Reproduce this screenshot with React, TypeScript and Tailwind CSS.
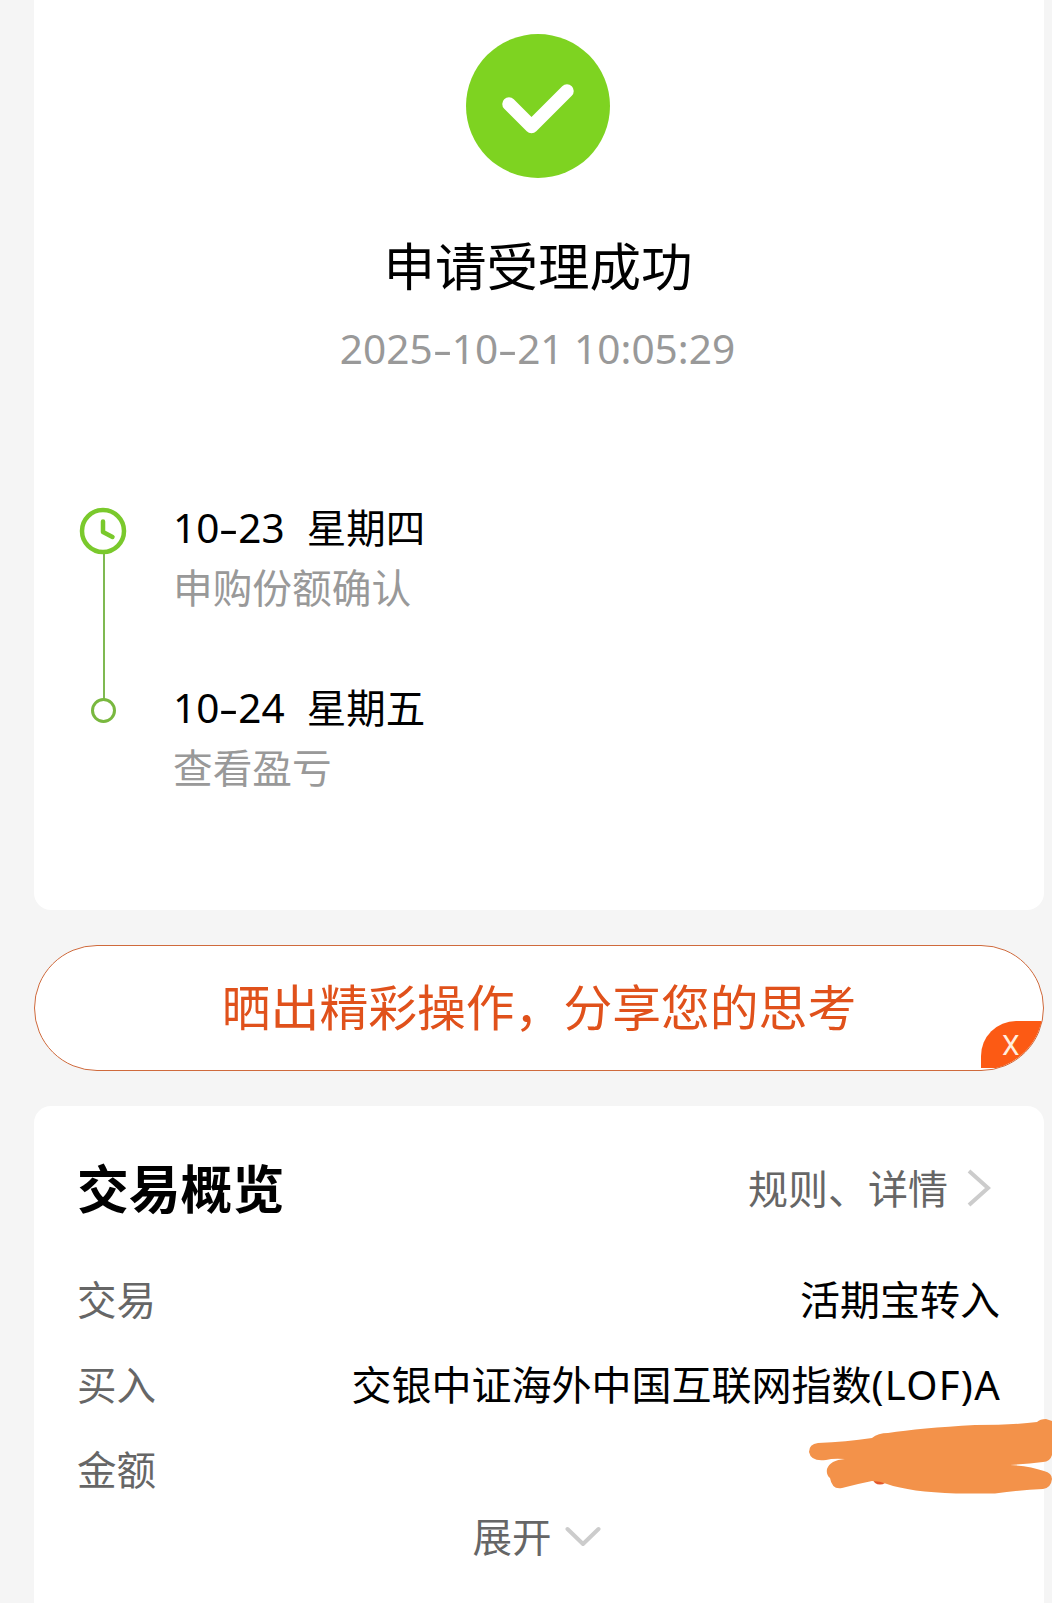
import React from 'react';

type StepType = {
  date: string;
  weekday: string;
  label: string;
};

type RowType = {
  label: string;
  value?: string;
  suffix?: string;
};

const steps: StepType[] = [
  { date: '10-23', weekday: '星期四', label: '申购份额确认' },
  { date: '10-24', weekday: '星期五', label: '查看盈亏' },
];

const rows: RowType[] = [
  { label: '交易', value: '活期宝转入' },
  { label: '买入', value: '交银中证海外中国互联网指数', suffix: '(LOF)A' },
  { label: '金额' },
];

// digits with a wide dash between the groups
const Digits: React.FC<{ text: string }> = ({ text }) => (
  <>
    {text.split('-').map((part, i) => (
      <React.Fragment key={i}>
        {i > 0 && (
          <span className="inline-block w-[19px] origin-center scale-x-[1.5] text-center">
            -
          </span>
        )}
        {part}
      </React.Fragment>
    ))}
  </>
);

const SuccessIcon = () => (
  <svg className="h-[144px] w-[144px]" viewBox="0 0 144 144" fill="none">
    <circle cx="72" cy="72" r="72" fill="#7ed321" />
    <path
      d="M43 70L65.500 92.500L101 57"
      stroke="#fff"
      strokeWidth="13.500"
      strokeLinecap="round"
      strokeLinejoin="round"
    />
  </svg>
);

const Timeline = () => (
  <svg className="h-[220px] w-[48px]" viewBox="0 0 48 220" fill="none">
    <path d="M25 45V192" stroke="#7fb951" strokeWidth="2" />
    <circle cx="24" cy="24" r="21" stroke="#7ac92c" strokeWidth="4.500" />
    <path
      d="M24 14.500V25L33.500 30"
      stroke="#7ac92c"
      strokeWidth="4.500"
      strokeLinecap="round"
      strokeLinejoin="round"
    />
    <circle cx="24.500" cy="203.500" r="11" stroke="#79b83f" strokeWidth="3" />
  </svg>
);

const ResultCard = () => (
  <section className="flex h-[910px] flex-col rounded-b-[17px] bg-white pt-[34px]">
    <div className="flex flex-col items-center pr-[2px]">
      <SuccessIcon />
      <h1 className="mt-[52px] text-[51.5px] leading-[68px]">申请受理成功</h1>
      <p className="mt-[18px] pr-[1px] font-['Noto_Sans','Noto_Sans_CJK_SC',sans-serif] text-[40.6px] leading-[66px] text-[#999]">
        <Digits text="2025-10-21 10:05:29" />
      </p>
    </div>
    <div className="mt-[125px] flex pl-[45px]">
      <Timeline />
      <div className="-mt-[9px] ml-[46px] flex flex-col gap-[60px]">
        {steps.map((step) => (
          <div key={step.date} className="h-[120px]">
            <p className="flex gap-[22px] font-['Noto_Sans','Noto_Sans_CJK_SC',sans-serif] text-[39.5px] leading-[60px] text-black">
              <span className="text-[40.5px]">
                <Digits text={step.date} />
              </span>
              <span>{step.weekday}</span>
            </p>
            <p className="-mt-[2px] text-[39.7px] leading-[60px] text-[#999]">
              {step.label}
            </p>
          </div>
        ))}
      </div>
    </div>
  </section>
);

const ShareBanner = () => (
  <section className="relative mt-[35px] flex h-[126px] items-center justify-center overflow-hidden rounded-full border border-[#cf6a3c] bg-white pb-[6px]">
    <p className="text-[48.8px] leading-[70px] text-[#e0511b]">
      晒出精彩操作，分享您的思考
    </p>
    <button className="absolute right-0 bottom-[2px] flex h-[47px] w-[62px] items-center rounded-tl-[35px] bg-[#fc5a14] pt-[3px] pl-[21px] font-[Roboto,sans-serif] text-[28px] leading-none text-[#ffeede]">
      X
    </button>
  </section>
);

// hand-drawn stroke hiding the amount
const Scribble = () => (
  <svg
    className="absolute top-[309px] -right-[8px] h-[85px] w-[247px]"
    viewBox="805 1415 247 85"
  >
    <ellipse cx="880" cy="1479" rx="7" ry="5.500" fill="#e4572a" />
    <path
      d="M818 1443Q846 1442 872 1438Q878 1433 888 1433Q920 1428 975 1425Q1015 1425 1037 1422Q1040 1419 1046 1419L1052 1421V1455Q1050 1462 1043 1462Q1027 1464 1010 1465Q1030 1466 1044 1471Q1052 1473 1052 1479Q1051 1488 1043 1489Q1020 1490 995 1493.500H956Q910 1492 887 1484Q880 1481 872 1481Q857 1484 842 1488Q832 1490 830 1478Q826 1475 827 1469Q830 1460 845 1459Q833 1458 826 1460Q811 1462 809 1452Q809 1444 818 1443Z"
      fill="#f3924a"
    />
  </svg>
);

const OverviewCard = () => (
  <section className="relative mt-[35px] h-[497px] rounded-t-[17px] bg-white pr-[44px] pl-[43px]">
    <div className="flex h-[164px] items-center justify-between">
      <h2 className="pb-[2px] text-[51.8px] leading-[70px] font-bold">
        交易概览
      </h2>
      <a className="flex items-center pr-[9px] text-[40px] leading-[60px] text-[#666]">
        <span className="pb-[2px]">规则、详情</span>
        <svg className="ml-[19px] h-[38px] w-[24px]" viewBox="0 0 24 38" fill="none">
          <path d="M2 2L21 19L2 36" stroke="#ccc" strokeWidth="4" />
        </svg>
      </a>
    </div>
    <div className="-mt-[14px]">
      {rows.map((row) => (
        <div
          key={row.label}
          className="flex h-[85px] items-center justify-between text-[39.5px] leading-[60px] whitespace-nowrap"
        >
          <span className="pb-[2px] text-[#666]">{row.label}</span>
          <span className="pt-[3px] font-['Noto_Sans','Noto_Sans_CJK_SC',sans-serif] text-[40px]">
            {row.value}
            {row.suffix && (
              <span className="-mr-[1px] tracking-[1.3px]">{row.suffix}</span>
            )}
          </span>
        </div>
      ))}
    </div>
    <div className="-mt-[1px] flex items-center justify-center pr-[4px] text-[39.5px] leading-[50px] text-[#666]">
      展开
      <svg className="mt-[4px] ml-[13px] h-[22px] w-[36px]" viewBox="0 0 36 22" fill="none">
        <path
          d="M2.500 3L18 18L33.500 3"
          stroke="#ccc"
          strokeWidth="4"
          strokeLinecap="round"
          strokeLinejoin="round"
        />
      </svg>
    </div>
    <Scribble />
  </section>
);

export default function App() {
  return (
    <main
      lang="zh-CN"
      className="h-[1603px] w-[1052px] overflow-hidden bg-[#f5f5f5] pr-[8px] pl-[34px] font-['Noto_Sans_CJK_SC',sans-serif] text-black"
    >
      <ResultCard />
      <ShareBanner />
      <OverviewCard />
    </main>
  );
}
